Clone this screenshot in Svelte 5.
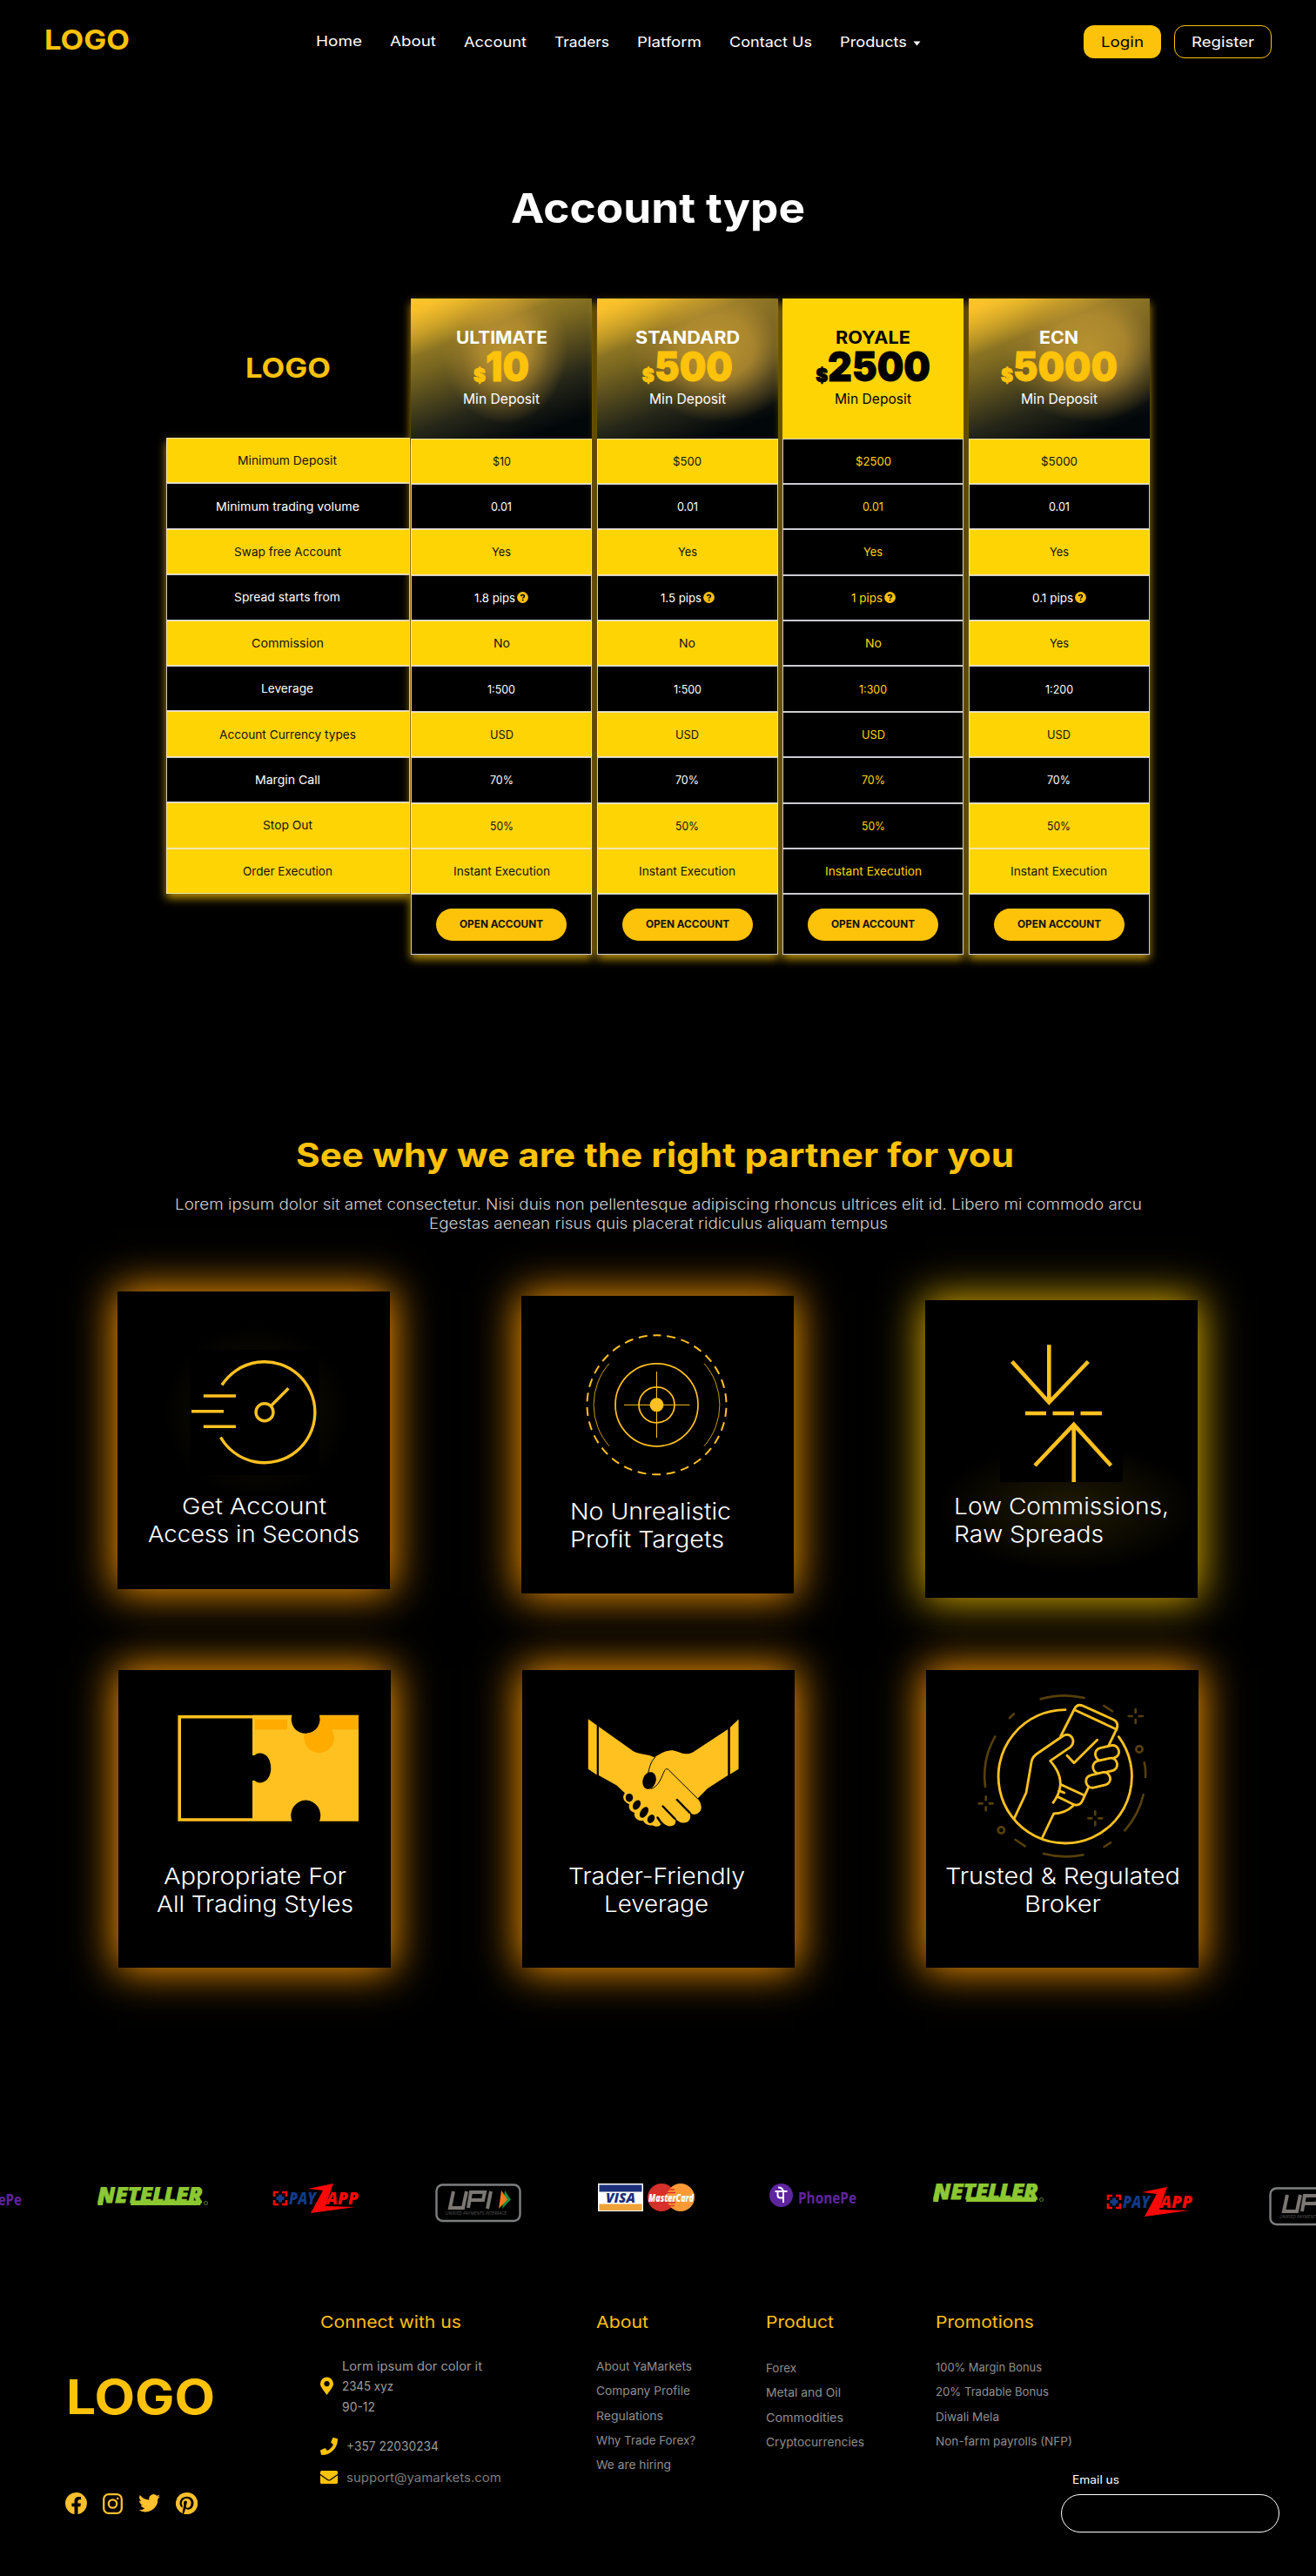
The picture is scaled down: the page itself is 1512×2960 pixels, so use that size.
<script>
  // Widens or narrows the glyphs of an element so that its text fills the given width.
  function fit(node, width) {
    const natural = node.getBoundingClientRect().width;
    if (!natural) return;
    node.style.width = `${width}px`;
    node.style.transform = `scaleX(${width / natural})`;
  }

  const nav = [
    ['Home', 53, true],
    ['About', 53, true],
    ['Account', 72],
    ['Traders', 63],
    ['Platform', 74],
    ['Contact Us', 95],
    ['Products', 77]
  ];

  const features = [
    ['Minimum Deposit', 114, true],
    ['Minimum trading volume', 165, false],
    ['Swap free Account', 123, true],
    ['Spread starts from', 122, false],
    ['Commission', 83, true],
    ['Leverage', 60, false],
    ['Account Currency types', 157, true],
    ['Margin Call', 75, false],
    ['Stop Out', 57, true],
    ['Order Execution', 103, true]
  ];

  const common = [['USD', 27], ['70%', 27], ['50%', 27], ['Instant Execution', 111]];
  const plans = [
    { name: 'ULTIMATE', nameW: 105, price: '10', priceW: 50, kind: 'narrow',
      cells: [['$10', 21], ['0.01', 24], ['Yes', 22], ['1.8 pips', 47], ['No', 19], ['1:500', 32], ...common] },
    { name: 'STANDARD', nameW: 120, price: '500', priceW: 90, kind: 'wide',
      cells: [['$500', 33], ['0.01', 24], ['Yes', 22], ['1.5 pips', 47], ['No', 19], ['1:500', 32], ...common] },
    { name: 'ROYALE', nameW: 86, price: '2500', priceW: 118, kind: 'royale',
      cells: [['$2500', 41], ['0.01', 24], ['Yes', 22], ['1 pips', 36], ['No', 19], ['1:300', 32], ...common] },
    { name: 'ECN', nameW: 45, price: '5000', priceW: 120, kind: 'wide',
      cells: [['$5000', 42], ['0.01', 24], ['Yes', 22], ['0.1 pips', 47], ['Yes', 22], ['1:200', 32], ...common] }
  ];

  const footerColumns = [
    { cls: 'about', title: ['About', 60], links: [['About YaMarkets', 110], ['Company Profile', 108], ['Regulations', 77], ['Why Trade Forex?', 114], ['We are hiring', 86]] },
    { cls: 'product', title: ['Product', 78], links: [['Forex', 35], ['Metal and Oil', 86], ['Commodities', 89], ['Cryptocurrencies', 113]] },
    { cls: 'promos', title: ['Promotions', 113], links: [['100% Margin Bonus', 122], ['20% Tradable Bonus', 130], ['Diwali Mela', 73], ['Non-farm payrolls (NFP)', 157]] }
  ];

  const sparkles = [[914, 276], [398, 577], [775, 628]];
</script>

{#snippet neteller()}
  <svg class="neteller" width="130" height="24" viewBox="0 0 130 24">
    <text x="2" y="18" font-size="25" font-weight="900" font-style="italic" textLength="121" lengthAdjust="spacingAndGlyphs" fill="#8cc832" stroke="#8cc832" stroke-width=".8">NETELLER</text>
    <path d="M2 21 6 3h5L8 21ZM41 15.500h81l-2 5.500H40Z" fill="#8cc832" />
    <circle cx="126.500" cy="18.500" r="2" fill="none" stroke="#5d8524" />
  </svg>
{/snippet}

{#snippet payzapp()}
  <svg width="101" height="34" viewBox="0 0 101 34">
    <path d="M7 10H2v5M2 19v5h5M11 10h5v5M16 19v5h-5" fill="none" stroke="#f00b0b" stroke-width="2.600" />
    <path d="M9 12.500v9M4.500 17h9" stroke="#123a86" stroke-width="4" />
    <text x="19" y="24" font-size="20" font-weight="900" textLength="31" lengthAdjust="spacingAndGlyphs" fill="#123a86" font-style="italic">PAY</text>
    <text x="62" y="24" font-size="20" font-weight="900" textLength="37" lengthAdjust="spacingAndGlyphs" fill="#fb0808" font-style="italic">APP</text>
    <path d="M41 6 70 0 61 26l34 1-51 7 14-26Z" fill="#fb0808" />
  </svg>
{/snippet}

{#snippet upi()}
  <svg width="100" height="45" viewBox="0 0 100 45">
    <rect x="1.500" y="1.500" width="96" height="41.500" rx="7" fill="none" stroke="#7d7f80" stroke-width="2.400" />
    <path d="M21 9 17 28h15L36 9M38 28 41 10h16l-2 9H41M64 9 60 29" fill="none" stroke="#7a7672" stroke-width="4" />
    <path d="m80 8 7 10.500L77 29Z" fill="#1d8a43" />
    <path d="m76 8 7 10.500L73 29Z" fill="#f47a1c" />
    <text x="12" y="36" font-size="5.500" font-style="italic" textLength="70" lengthAdjust="spacingAndGlyphs" fill="#555">UNIFIED PAYMENTS INTERFACE</text>
  </svg>
{/snippet}

<div class="page">
  <header>
    <div class="logo" use:fit={98}>LOGO</div>
    <nav>
      {#each nav as [label, w, raised]}
        <a href="#{label}" class:raised><span use:fit={w}>{label}</span></a>
      {/each}
      <svg class="caret" width="9" height="6" viewBox="0 0 9 6"><path d="M.5.500h8L4.500 5.500Z" fill="#fff" /></svg>
    </nav>
    <button class="login"><span use:fit={49}>Login</span></button>
    <button class="register"><span use:fit={72}>Register</span></button>
  </header>

  <h1><span use:fit={338}>Account type</span></h1>

  <section class="plans">
    <div class="features">
      <div class="brand"><span class="logo" use:fit={98}>LOGO</span></div>
      <div class="stack">
        {#each features as [label, w, gold]}
          <div class="cell" class:gold><span use:fit={w}>{label}</span></div>
        {/each}
      </div>
    </div>
    <div class="columns">
      {#each plans as plan}
        <div class="plan {plan.kind}">
          <div class="head">
            <div class="name"><span use:fit={plan.nameW}>{plan.name}</span></div>
            <div class="price"><small>$</small><span use:fit={plan.priceW}>{plan.price}</span></div>
            <div class="min"><span use:fit={88}>Min Deposit</span></div>
          </div>
          {#each plan.cells as [text, w], i}
            <div class="cell" class:gold={features[i][2] && plan.kind !== 'royale'}>
              <span use:fit={w}>{text}</span>
              {#if i === 3}
                <svg class="help" width="13" height="13" viewBox="0 0 13 13">
                  <circle cx="6.500" cy="6.500" r="6.400" fill="#fdbf10" />
                  <path d="M4.600 5.100C4.700 2.900 8.600 2.900 8.500 5.100 8.400 6.300 6.600 6.300 6.600 7.800" fill="none" stroke="#000" stroke-width="1.500" />
                  <circle cx="6.600" cy="9.600" r=".95" />
                </svg>
              {/if}
            </div>
          {/each}
          <div class="cell action"><button><span use:fit={96}>OPEN ACCOUNT</span></button></div>
        </div>
      {/each}
    </div>
  </section>

  <h2><span use:fit={825}>See why we are the right partner for you</span></h2>
  <p class="lead">
    <span use:fit={1111}>Lorem ipsum dolor sit amet consectetur. Nisi duis non pellentesque adipiscing rhoncus ultrices elit id. Libero mi commodo arcu</span>
    <span use:fit={527}>Egestas aenean risus quis placerat ridiculus aliquam tempus</span>
  </p>

  <section class="cards first">
    <article>
      <svg width="313" height="231" viewBox="135 1484 313 231" fill="none" stroke="#ffc120" stroke-width="3.400">
        <defs>
          <radialGradient id="haze"><stop offset=".4" stop-color="#ffd000" stop-opacity=".06" /><stop offset="1" stop-color="#ffd000" stop-opacity="0" /></radialGradient>
        </defs>
        <ellipse cx="295" cy="1622" rx="108" ry="100" fill="url(#haze)" stroke="none" />
        <rect x="218" y="1551" width="149" height="144" fill="#000" stroke="none" />
        <path d="M255 1591.500A58 58 0 1 1 253.500 1651.500" />
        <circle cx="304" cy="1622.700" r="10" />
        <path d="M311.300 1615.500 331.400 1595.300M233.800 1604H271M220 1621.700H257M233.800 1639.300H271" />
      </svg>
      <h3><span use:fit={166}>Get Account</span><span use:fit={243}>Access in Seconds</span></h3>
    </article>
    <article class="lower start">
      <svg width="313" height="232" viewBox="599 1489 313 232" fill="none" stroke="#ffc120" stroke-width="1.700">
        <circle cx="754.500" cy="1614.300" r="80" stroke-dasharray="10 6.755" stroke-dashoffset="5" transform="rotate(-90 754.500 1614.300)" stroke-width="2" />
        <path d="M700 1566.700A72 72 0 0 0 700 1661.700M809 1566.700A72 72 0 0 1 809 1661.700" stroke-width=".8" />
        <circle cx="754.500" cy="1614.300" r="47.500" />
        <circle cx="754.500" cy="1614.300" r="20.500" />
        <path d="M754.500 1576v76M717 1614.300h75.500" stroke-width="1" />
        <circle cx="754.500" cy="1614.300" r="8" fill="#ffc120" stroke="none" />
      </svg>
      <h3><span use:fit={185}>No Unrealistic</span><span use:fit={177}>Profit Targets</span></h3>
    </article>
    <article class="lowest start yellow">
      <svg width="313" height="221" viewBox="1063 1494 313 221" fill="none" stroke="#ffc120" stroke-width="4.600">
        <rect x="1149" y="1546" width="141" height="157" fill="#000" stroke="none" />
        <path d="M1205.300 1545.300V1612M1162.700 1564.500 1205.300 1611.500 1250.300 1564.500" />
        <path d="M1178 1624h24M1209.500 1624h24.500M1241.500 1624h24.500" />
        <path d="M1233.700 1703V1637M1189 1684 1233.700 1637 1276.500 1684" />
      </svg>
      <h3><span use:fit={247}>Low Commissions,</span><span use:fit={172}>Raw Spreads</span></h3>
    </article>
  </section>

  <section class="cards second">
    <article>
      <svg width="313" height="221" viewBox="136 1919 313 221">
        <defs>
          <clipPath id="piece"><path d="M290 1970.700H335.500A16.500 16.500 0 1 0 367 1970.700H412V2092.700H367A17 17.500 0 1 0 335.500 2092.700H290Z" /></clipPath>
        </defs>
        <path d="M290 1972.700H206.200V2091H290" fill="none" stroke="#ffc120" stroke-width="3.600" />
        <g clip-path="url(#piece)">
          <path d="M290 1970h122v123H290Z" fill="#ffc120" />
          <path d="M293 1975.700h37v11.500h-37ZM367 1971.500h45v15.800H381a17 17 0 1 1-31 9V1975Z" fill="#ffab00" />
          <circle cx="366" cy="1997" r="16.800" fill="#ffab00" />
          <path d="M289 2017h3.500c4-4 11-3 15 2 5 7 5 19 0 25-4 5-11 6-15 2H289Z" fill="#000" />
        </g>
      </svg>
      <h3><span use:fit={210}>Appropriate For</span><span use:fit={226}>All Trading Styles</span></h3>
    </article>
    <article class="nudge">
      <svg width="313" height="221" viewBox="600 1919 313 221" fill="#ffc120">
        <path d="M675.800 1975.300 685.700 1982.500V2039.500L675.800 2032.700ZM848.600 1975.500 838.800 1985V2038.800L848.600 2032.700Z" />
        <path d="M687.900 1984 728 2012.500C738 2017 744 2015 751.500 2019.300 759 2015 766 2010.500 774 2011.500 781 2013 787 2018 796 2013.500L836.300 1987V2040L813 2055 801.500 2066.500C806 2072 808 2080 802 2083.500 798 2086 795 2085 792 2082 795 2089 792 2094 786 2094.500 781 2095 777 2091 775.500 2089 778 2096 774 2099 768 2098.300 763 2097 761 2093 759 2093 761 2099 754 2100 750 2097.500 744 2098 740 2095 739 2092 732 2093 728 2088 729 2083 723 2081 722 2077 723 2073 717 2071 714 2065 718 2060.500L708.500 2051.500 687.900 2040Z" />
        <g fill="#000">
          <ellipse cx="746" cy="2046" rx="7.500" ry="10" transform="rotate(20 746 2046)" />
          <ellipse cx="723" cy="2065.700" rx="4.200" ry="4.800" />
          <ellipse cx="731.500" cy="2074" rx="4" ry="6" transform="rotate(30 731.500 2074)" />
          <ellipse cx="740" cy="2082.500" rx="4" ry="7" transform="rotate(33 740 2082.500)" />
          <ellipse cx="748" cy="2090" rx="3.800" ry="5.200" transform="rotate(30 748 2090)" />
        </g>
        <g fill="none" stroke="#000" stroke-linecap="round">
          <path d="M753 2019C747 2024 746 2033 744.500 2038M748 2055.500C757 2053 760 2042 763.500 2034.500 765 2032 767 2032 769 2034.500L801.500 2066.700" />
          <path d="M777.800 2068 792.500 2083M761.500 2075.500 775.500 2090M755.500 2088.500 760 2095" stroke-width="2.400" />
        </g>
      </svg>
      <h3><span use:fit={203}>Trader-Friendly</span><span use:fit={120}>Leverage</span></h3>
    </article>
    <article>
      <svg width="313" height="221" viewBox="192 117 939 663" fill="none" stroke="#ffc120" stroke-width="8.500" stroke-linecap="round" stroke-linejoin="round">
        <g stroke="#553f0b" stroke-width="8">
          <path d="M587 217Q662 195 737 213M805 240 834 259M480 282 495 268M430 346Q384 425 396 519M944 436Q950 460 948 486M941 547Q925 615 877 670M828 712 806 726M733 754Q665 768 597 750M500 702 533 724" />
          <circle cx="927" cy="390" r="11" />
          <circle cx="451" cy="669" r="11" />
          {#each sparkles as [x, y]}
            <path transform="translate({x} {y})" d="M0-24V-12M0 12V24M-24 0H-12M12 0H24" />
          {/each}
        </g>
        <path d="M672 254A230 230 0 1 0 856 347" />
        <path d="M656 345 703 252Q712 232 732 240L838 288Q857 298 849 320L820 380M704 254 849 322M752 521 732 565Q723 587 702 581L647 554M658 512 736 548M650 533 668 540" />
        <path d="M496 628 537 540 556 430Q560 415 575 405L658 348Q680 332 694 348 706 366 690 382L620 430Q656 470 655 512 652 545 630 574M592 696 632 612Q670 612 698 586" />
        <path d="M678 412 702 437 782 358" />
        <g fill="#000">
          <rect x="775" y="381" width="82" height="44" rx="21" transform="rotate(-13 816 403)" />
          <rect x="767" y="425" width="84" height="44" rx="21" transform="rotate(-13 809 447)" />
          <rect x="743" y="474" width="84" height="44" rx="21" transform="rotate(-13 785 496)" />
        </g>
      </svg>
      <h3><span use:fit={270}>Trusted &amp; Regulated</span><span use:fit={88}>Broker</span></h3>
    </article>
  </section>

  <section class="payments">
    <svg class="cut" width="26" height="28" viewBox="0 0 26 28"><text x="-41" y="25" font-size="17" font-weight="700" textLength="66" lengthAdjust="spacingAndGlyphs" fill="#5f259f">PhonePe</text></svg>
    <div class="p-net">{@render neteller()}</div>
    <div class="p-pay">{@render payzapp()}</div>
    <div class="p-upi">{@render upi()}</div>
    <svg class="p-card" width="112" height="33" viewBox="0 0 112 33">
      <path d="M0 0h52v32H0Z" fill="#fff" />
      <path d="M1.500 1.500h49v8h-49Z" fill="#1c2f7c" />
      <path d="M1.500 23.500h49v7.500h-49Z" fill="#f0a23a" />
      <text x="9" y="22" font-size="15" font-weight="800" font-style="italic" textLength="34" lengthAdjust="spacingAndGlyphs" fill="#1c2f7c">VISA</text>
      <circle cx="73" cy="16" r="16" fill="#d5302b" />
      <circle cx="95" cy="16" r="16" fill="#fb9a36" />
      <path d="M80 7h8M79 10.500h10M79 22h10M80 25.500h8" stroke="#d5302b" stroke-width="1.600" />
      <text x="58" y="21" font-size="13" font-weight="800" font-style="italic" textLength="52" lengthAdjust="spacingAndGlyphs" fill="#fff">MasterCard</text>
    </svg>
    <svg class="p-phone" width="101" height="28" viewBox="0 0 101 28">
      <circle cx="13.500" cy="13.500" r="13.500" fill="#5f259f" />
      <path d="M6.500 9h14M9.500 9v4.500q0 3 3 3h3M16 9v13M10 4.500q5 0 6 4.500" fill="none" stroke="#fff" stroke-width="2" />
      <text x="33" y="23" font-size="17" font-weight="700" textLength="67" lengthAdjust="spacingAndGlyphs" fill="#5f259f">PhonePe</text>
    </svg>
    <div class="p-net2">{@render neteller()}</div>
    <div class="p-pay2">{@render payzapp()}</div>
    <div class="p-upi2">{@render upi()}</div>
  </section>

  <footer>
    <div class="identity">
      <div class="biglogo"><span use:fit={171}>LOGO</span></div>
      <div class="social">
        <svg width="25" height="25" viewBox="0 0 24 24" fill="#ffc02e"><path d="M24 12A12 12 0 1 0 10.100 23.900v-8.400H7.100V12h3V9.400c0-3 1.800-4.700 4.500-4.700 1.300 0 2.700.2 2.700.2v3h-1.500c-1.500 0-2 .9-2 1.900V12h3.400l-.5 3.500h-2.800v8.400A12 12 0 0 0 24 12Z" /></svg>
        <svg width="23" height="24" viewBox="0 0 23 24" fill="none" stroke="#ffc02e" stroke-width="2.300"><rect x="1.200" y="1.200" width="20.600" height="21.600" rx="5.500" /><circle cx="11.500" cy="12" r="4.700" /><circle cx="17.200" cy="6" r="1.300" fill="#ffc02e" stroke="none" /></svg>
        <svg width="25" height="21" viewBox="0 0 24 20" fill="#ffc02e"><path d="M24 2.400c-.9.400-1.800.7-2.800.8 1-.6 1.800-1.600 2.200-2.700-1 .6-2 1-3.100 1.200A4.900 4.900 0 0 0 11.900 6.200C7.700 6 4.100 4 1.700.9c-1.300 2.200-.7 5.100 1.500 6.600-.8 0-1.600-.2-2.200-.6 0 2.300 1.600 4.400 3.900 4.900-.7.200-1.500.2-2.200.1.600 2 2.400 3.400 4.600 3.400A9.900 9.900 0 0 1 0 17.300 14 14 0 0 0 21.500 4.900c1-.7 1.800-1.600 2.500-2.500Z" /></svg>
        <svg width="25" height="25" viewBox="0 0 24 24" fill="#ffc02e"><path d="M12 0a12 12 0 0 0-4.400 23.200c-.1-.9-.2-2.400 0-3.400l1.400-6s-.4-.7-.4-1.800c0-1.700 1-2.900 2.200-2.900 1 0 1.500.8 1.500 1.700 0 1-.7 2.600-1 4-.3 1.200.6 2.200 1.800 2.200 2.100 0 3.800-2.300 3.800-5.500 0-2.900-2.100-4.900-5-4.900a5.200 5.200 0 0 0-5.400 5.200c0 1 .4 2.200.9 2.800.1.100.1.200.1.300l-.3 1.400c-.1.200-.2.300-.4.200-1.500-.7-2.400-2.900-2.400-4.600 0-3.800 2.700-7.300 7.900-7.300 4.100 0 7.400 3 7.400 6.900 0 4.100-2.600 7.400-6.200 7.400-1.200 0-2.300-.6-2.700-1.400l-.8 2.800c-.3 1-1 2.300-1.500 3.100A12 12 0 1 0 12 0Z" /></svg>
      </div>
    </div>

    <div class="connect">
      <h4><span use:fit={162}>Connect with us</span></h4>
      <div class="row address">
        <svg width="15" height="21" viewBox="0 0 384 512" fill="#fdc20a"><path d="M172 501.700C27 291.400 0 269.400 0 192a192 192 0 0 1 384 0c0 77.400-27 99.400-172 309.700a24 24 0 0 1-40 0ZM192 272a80 80 0 1 0 0-160 80 80 0 0 0 0 160Z" /></svg>
        <div class="lines"><span use:fit={161}>Lorm ipsum dor color it</span><span use:fit={59}>2345 xyz</span><span use:fit={38}>90-12</span></div>
      </div>
      <div class="row phone">
        <svg width="20" height="20" viewBox="0 0 512 512" fill="#fdc20a"><path d="M493.400 24.600l-104-24c-11.300-2.600-22.900 3.300-27.500 13.900l-48 112c-4.200 9.800-1.400 21.300 6.900 28l60.600 49.600c-36 76.700-98.900 140.500-177.200 177.200l-49.600-60.600c-6.800-8.300-18.200-11.100-28-6.900l-112 48C3.900 366.500-2 378.100.6 389.400l24 104C27.100 504.200 36.700 512 48 512c256.100 0 464-207.500 464-464 0-11.200-7.700-20.900-18.600-23.400Z" /></svg>
        <span use:fit={106}>+357 22030234</span>
      </div>
      <div class="row mail">
        <svg width="20" height="15" viewBox="0 0 20 15"><rect width="20" height="15" rx="1.600" fill="#fdc20a" /><path d="M0 4.500 8.500 10.500q1.500 1 3 0L20 4.500" fill="none" stroke="#000" stroke-width="1.200" /></svg>
        <span use:fit={178}>support@yamarkets.com</span>
      </div>
    </div>

    {#each footerColumns as col}
      <div class="links {col.cls}">
        <h4><span use:fit={col.title[1]}>{col.title[0]}</span></h4>
        <ul>
          {#each col.links as [label, w]}
            <li><span use:fit={w}>{label}</span></li>
          {/each}
        </ul>
        {#if col.cls === 'promos'}
          <label><span use:fit={54}>Email us</span><input type="email" /></label>
        {/if}
      </div>
    {/each}
  </footer>
</div>

<style>
  :global(body) { background: #000; }
  * { box-sizing: border-box; }
  .page {
    width: 1512px;
    height: 2960px;
    overflow: hidden;
    background: #000;
    color: #fff;
    font-family: Inter, "Liberation Sans", sans-serif;
  }
  h1, h2, h3, h4, p, ul { margin: 0; padding: 0; font-weight: 400; list-style: none; }
  span, .logo { display: inline-block; white-space: nowrap; transform-origin: 0 50%; text-align: left; flex: none; }
  svg { display: block; flex: none; font-family: "Open Sans", Inter, sans-serif; }
  button { font: inherit; padding: 0; border: 0; cursor: pointer; }

  .logo { color: #fdc20a; font-size: 31.500px; font-weight: 700; line-height: 40px; }
  header { display: flex; align-items: center; height: 96px; padding: 0 51px 0 51px; }
  header .logo { padding-bottom: 4px; }
  nav { display: flex; align-items: center; gap: 32px; margin-left: 214px; font-size: 16.500px; font-weight: 400; line-height: 24px; }
  nav a { display: flex; color: #fff; text-decoration: none; }
  nav .raised { padding-bottom: 2px; }
  .caret { margin: 4px 0 0 -25px; }
  header button { height: 38px; border-radius: 12px; font-size: 16.500px; font-weight: 400; }
  .login { width: 89px; margin-left: auto; background: #fdc20a; color: #000; }
  .register { width: 112px; margin-left: 15px; background: #000; color: #fff; border: 1px solid #fdc20a; }

  h1 { margin-top: 113px; height: 60px; line-height: 60px; text-align: center; font-size: 47px; }
  h1 span { font-weight: 680; }

  .plans { display: flex; margin: 74px 0 0 191px; }
  .features { width: 281px; }
  .brand { height: 160px; padding-right: 1px; display: flex; align-items: center; justify-content: center; }
  .stack, .plan { box-shadow: 0 5px 10px rgba(255, 200, 0, .72); }
  .stack { width: 280px; }
  .stack .cell { padding-right: 2px; }
  .columns { display: flex; gap: 5.670px; }
  .plan { width: 208px; }
  .cell {
    display: flex; align-items: center; justify-content: center;
    height: 52.400px; background: #000; border: 1px solid rgba(238, 238, 245, .85);
    font-size: 13px;
  }
  .gold { background: #ffd405; color: #111; border-color: #f3e6b5; }
  .royale .cell { color: #ffd405; }
  .help { margin-left: 2px; }
  .action { height: 69.500px; }
  .action button { width: 150px; height: 37px; border-radius: 19px; background: #fdc20a; color: #111; font-size: 11.500px; font-weight: 650; }

  .head { height: 160.500px; padding-top: 35px; text-align: center; color: #fff; }
  .narrow .head {
    background:
      linear-gradient(158deg, #ffc42b 0, rgba(255, 196, 43, .9) 6%, rgba(255, 196, 43, 0) 28%),
      radial-gradient(ellipse 72px 88px at 108px 56px, #b8922f 0, rgba(178, 140, 48, .88) 40%, rgba(160, 125, 45, .42) 72%, rgba(140, 110, 40, 0) 100%),
      linear-gradient(160deg, #c8a22a 0, #7b6820 36%, #262719 66%, #02070a 88%);
  }
  .wide .head {
    background:
      linear-gradient(158deg, #ffc42b 0, rgba(255, 196, 43, .9) 6%, rgba(255, 196, 43, 0) 28%),
      radial-gradient(ellipse 100px 86px at 138px 56px, #b8922f 0, rgba(178, 140, 48, .88) 42%, rgba(160, 125, 45, .42) 72%, rgba(140, 110, 40, 0) 100%),
      linear-gradient(160deg, #c8a22a 0, #7b6820 36%, #262719 66%, #02070a 88%);
  }
  .royale .head { background: #ffd405; color: #000; }
  .name { height: 20px; line-height: 20px; font-size: 19.500px; font-weight: 680; }
  .price { display: flex; justify-content: center; height: 46px; color: #fdc20a; font-size: 46.500px; font-weight: 900; line-height: 46px; -webkit-text-stroke: .8px currentColor; }
  .price small { height: 20px; margin-top: 24px; font-size: 21px; line-height: 20px; }
  .royale .price { color: #000; }
  .min { margin-top: 3px; font-size: 15.500px; line-height: 24px; }

  h2 { margin: 205px 0 0 -7px; height: 50px; line-height: 50px; text-align: center; color: #fdc20a; font-size: 38.500px; }
  h2 span { font-weight: 680; }
  .lead { display: flex; flex-direction: column; align-items: center; margin: 21px 0 67px; height: 44px; line-height: 22px; font-size: 17px; font-weight: 270; color: #d0d0d0; }

  .cards { display: flex; gap: 151px; align-items: flex-start; }
  .first { height: 352px; padding-left: 135px; }
  .second { height: 342px; margin-top: 83px; padding-left: 136px; }
  article { width: 313px; height: 342px; background: #000; box-shadow: 0 0 46px 3px #ff9b00; }
  .lower { margin-top: 5px; }
  .lowest { margin-top: 10px; }
  .yellow { background: radial-gradient(ellipse 150px 75px at 165px 238px, #201a02 0, #000 100%); box-shadow: 0 0 46px 3px #e0b000; }
  h3 { display: flex; flex-direction: column; align-items: center; font-size: 26px; line-height: 32px; font-weight: 330; }
  .start h3 { align-items: flex-start; padding-left: 56px; }
  .yellow h3 { padding-left: 33px; }
  .nudge h3 { padding-right: 5px; }

  .payments { display: flex; align-items: flex-start; height: 48px; margin-top: 248px; }
  .payments svg { overflow: hidden; }
  .p-net { margin: 4px 0 0 84px; }
  .p-pay { margin-left: 73px; }
  .p-upi { margin-left: 86px; }
  .p-card { margin-left: 87px; }
  .p-phone { margin-left: 85px; }
  .p-net2 { margin-left: 85px; }
  .p-pay2 { margin: 4px 0 0 71px; }
  .p-upi2 { margin: 4px 0 0 86px; width: 54px; overflow: hidden; }

  footer { display: flex; padding: 0 0 0 75px; margin-top: 98px; }
  .identity { width: 293px; }
  .biglogo { height: 210px; padding: 69px 0 0 1px; color: #fdc20a; font-size: 55px; font-weight: 680; line-height: 60px; }
  .social { display: flex; align-items: center; gap: 18px; height: 24px; }
  .connect { width: 317px; color: #9a9a9a; font-size: 14px; }
  h4 { height: 26px; padding-top: 1px; line-height: 26px; font-size: 19px; color: #fdbe18; }
  .row { display: flex; align-items: center; }
  .address { margin-top: 25px; height: 72px; }
  .lines { display: flex; flex-direction: column; align-items: flex-start; margin-left: 10px; line-height: 23.500px; }
  .phone { height: 24px; margin-top: 21px; gap: 10px; }
  .mail { height: 24px; margin-top: 12px; gap: 10px; color: #7c7c7c; }
  .links { width: 195px; color: #8f8f8f; font-size: 13px; }
  .links ul { margin-top: 24px; }
  .product ul { margin-top: 26px; }
  .promos ul { margin-top: 25px; }
  .promos { width: 400px; }
  li { height: 28.400px; line-height: 28.400px; }
  label { display: flex; flex-direction: column; align-items: flex-start; margin: 21px 0 0 157px; line-height: 20px; color: #fff; font-size: 12.500px; }
  input { width: 251px; height: 44px; margin: 6px 0 0 -13px; border: 1px solid #fff; border-radius: 22px; background: transparent; }
</style>
